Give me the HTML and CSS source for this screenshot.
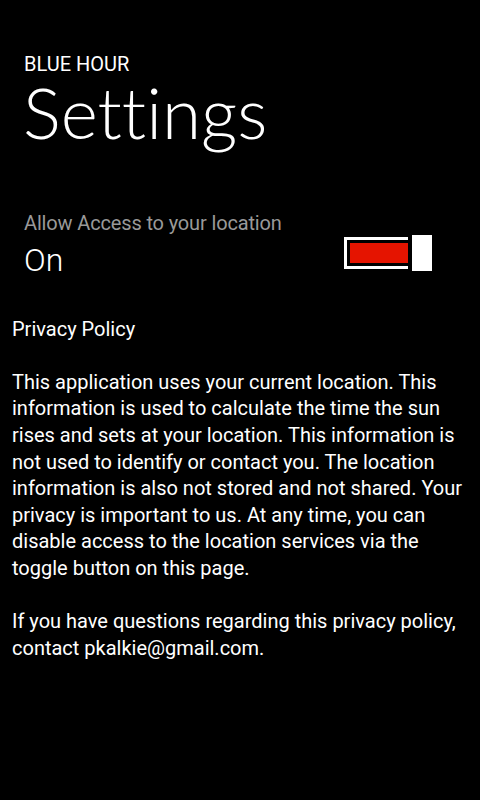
FILE: index.html
```html
<!DOCTYPE html>
<html lang="en">
<head>
<meta charset="utf-8">
<title>Blue Hour – Settings</title>
<link rel="stylesheet" href="styles.css">
</head>
<body>
<div class="page">
  <header class="title-panel">
    <div class="app-title">BLUE HOUR</div>
    <h1 class="page-title">Settings</h1>
  </header>

  <div class="setting-row">
    <div class="setting-text">
      <div class="setting-label">Allow Access to your location</div>
      <div class="setting-value">On</div>
    </div>
    <div class="toggle" role="switch" aria-checked="true">
      <div class="toggle-track"><div class="toggle-fill"></div></div>
      <div class="toggle-thumb"></div>
    </div>
  </div>

  <section class="policy">
    <p>Privacy Policy</p>
    <p>This application uses your current location. This information is used to calculate the time the sun rises and sets at your location. This information is not used to identify or contact you. The location information is also not stored and not shared. Your privacy is important to us. At any time, you can disable access to the location services via the toggle button on this page.</p>
    <p>If you have questions regarding this privacy policy, contact pkalkie@gmail.com.</p>
  </section>
</div>
</body>
</html>
```
FILE: styles.css
```css
html, body {
  margin: 0;
  padding: 0;
  background: #000;
}

body {
  width: 480px;
  height: 800px;
  overflow: hidden;
  color: #fff;
  font-family: Roboto, "Noto Sans", sans-serif;
}

.page {
  padding: 0 12px;
}

.title-panel {
  padding: 53px 0 0 12px;
}

.app-title {
  font-size: 20px;
  line-height: 23px;
  font-weight: 400;
}

.page-title {
  margin: 0;
  font-family: Lato, Roboto, sans-serif;
  font-size: 71px;
  line-height: 72px;
  font-weight: 300;
  font-variant-ligatures: none;
  margin-left: -1px;
}

.setting-row {
  display: flex;
  align-items: flex-start;
  justify-content: space-between;
  margin-top: 62px;
  padding-left: 12px;
}

.setting-text {
  display: flex;
  flex-direction: column;
}

.setting-label {
  font-size: 20px;
  line-height: 26.6px;
  letter-spacing: -0.15px;
  color: #999;
}

.setting-value {
  margin-top: 3px;
  font-size: 32px;
  line-height: 40px;
  font-weight: 300;
}

.toggle {
  display: flex;
  align-items: center;
  margin-top: 25px;
  margin-right: 36px;
}

.toggle-track {
  width: 58px;
  padding: 3px 0 3px 3px;
  border: 3px solid #fff;
  border-right: 0;
}

.toggle-fill {
  height: 20px;
  background: #e51400;
}

.toggle-thumb {
  width: 20px;
  height: 36px;
  margin-left: 4px;
  background: #fff;
}

.policy {
  margin-top: 36px;
  font-size: 20px;
  line-height: 26.6px;
}

.policy p {
  margin: 0;
}

.policy p + p {
  margin-top: 26.6px;
}
```
